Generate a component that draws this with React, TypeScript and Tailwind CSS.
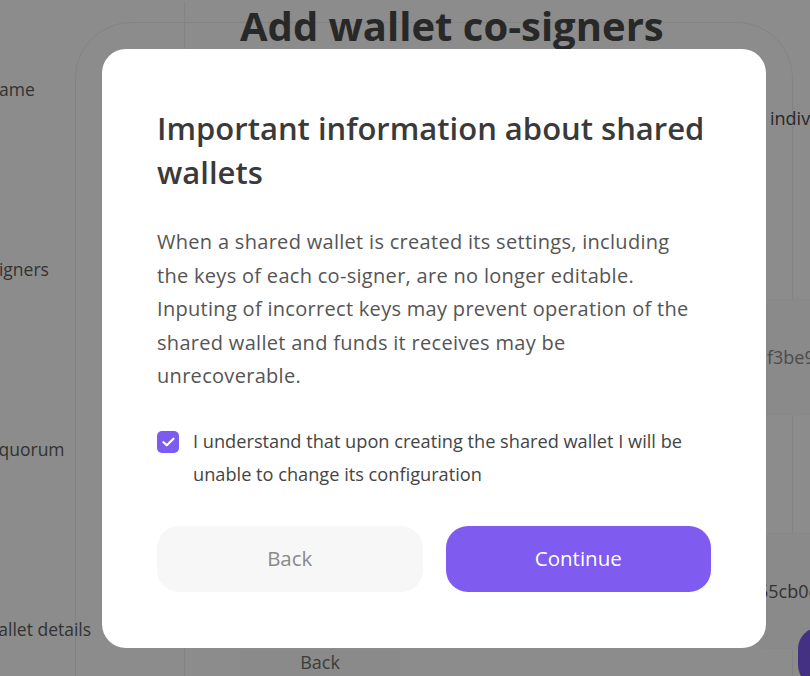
const steps = [
  { label: 'Wallet name', shift: '-ml-[143px]' },
  { label: 'Add co-signers', shift: '-ml-[147px]' },
  { label: 'Choose quorum', shift: '-ml-[143px]' },
  { label: 'Review wallet details', shift: '-ml-[153px]' },
]

function Background() {
  return (
    <div className="ml-[75px] mt-[22px] flex h-[760px] w-[718px] rounded-[56px] border border-[#efefef]">
      <nav className="flex w-[108px] shrink-0 flex-col gap-[156px] pt-[54px]">
        {steps.map((s) => (
          <div key={s.label} className={`${s.shift} h-[24px] whitespace-nowrap text-[17.5px] leading-[24px] text-[#5c5c5c]`}>
            {s.label}
          </div>
        ))}
      </nav>
      <main className="-mt-[21px] flex flex-1 flex-col border-l border-[#f0f0f0] pl-[55px]">
        <h1 className="whitespace-nowrap text-[40px] font-bold leading-[48px] text-[#4a4a4a]">Add wallet co-signers</h1>
        <div className="flex">
          <div className="w-[510px] shrink-0" />
          <div className="flex w-[300px] shrink-0 flex-col">
            <p className="mt-[55px] ml-[20px] whitespace-nowrap text-[18px] leading-[26px] text-[#4a4a4a]">individual co-signer keys</p>
            <div className="mt-[168px] flex h-[116px] items-center rounded-[16px] border border-[#f7f7f7] bg-[#fcfcfc] pl-[16px] text-[18px] text-[#8a8a8a]">
              f3be91c0a27d
            </div>
            <div className="mt-[118px] flex h-[116px] items-center rounded-[16px] border border-[#f7f7f7] bg-[#fcfcfc] pl-[7px] text-[18px] text-[#5a5a5a]">
              55cb0e4a19f2
            </div>
          </div>
        </div>
        <div className="mt-[-22px] flex items-start">
          <button className="mt-[22px] flex h-[60px] w-[160px] justify-center bg-[#fbfbfb] text-[18px] leading-[26px] text-[#707070]">Back</button>
          <div className="w-[398px]" />
          <button className="h-[60px] w-[200px] rounded-[22px] bg-[#7f5af0] text-[18px] text-white">Create</button>
        </div>
      </main>
    </div>
  )
}

function Modal() {
  return (
    <div className="absolute inset-0 bg-[rgba(0,0,0,0.45)] pl-[102px] pt-[49px]">
      <div className="w-[664px] rounded-[24px] bg-white px-[55px] pt-[57px] pb-[56px]">
        <h2 className="text-[31px] font-semibold leading-[44px] text-[#3a3a3a]">Important information about shared wallets</h2>
        <p className="mt-[31px] max-w-[540px] text-[20px] leading-[33.5px] tracking-[0.015em] text-[#555555]">
          When a shared wallet is created its settings, including the keys of each co-signer, are no longer editable.
          Inputing of incorrect keys may prevent operation of the shared wallet and funds it receives may be
          unrecoverable.
        </p>
        <label className="mt-[32px] flex items-start gap-[14px]">
          <span className="mt-[6px] flex h-[22px] w-[22px] shrink-0 items-center justify-center rounded-[5px] bg-[#7c5cf0]">
            <svg width="13" height="10" viewBox="0 0 13 10" fill="none">
              <path d="M1.5 5.2 4.8 8.3 11.5 1.7" stroke="white" strokeWidth="2.2" strokeLinecap="round" strokeLinejoin="round" />
            </svg>
          </span>
          <span className="text-[18.2px] leading-[33px] text-[#444444]">
            I understand that upon creating the shared wallet I will be unable to change its configuration
          </span>
        </label>
        <div className="mt-[35px] flex gap-[23px]">
          <button className="h-[66px] flex-1 rounded-[22px] bg-[#f7f7f7] text-[20.5px] text-[#8a8a8a]">Back</button>
          <button className="h-[66px] flex-1 rounded-[22px] bg-[#7f5bf0] text-[20.5px] text-white">Continue</button>
        </div>
      </div>
    </div>
  )
}

export default function App() {
  return (
    <div className="relative h-[676px] w-[810px] overflow-hidden bg-white font-['Open_Sans',sans-serif]">
      <Background />
      <Modal />
    </div>
  )
}
